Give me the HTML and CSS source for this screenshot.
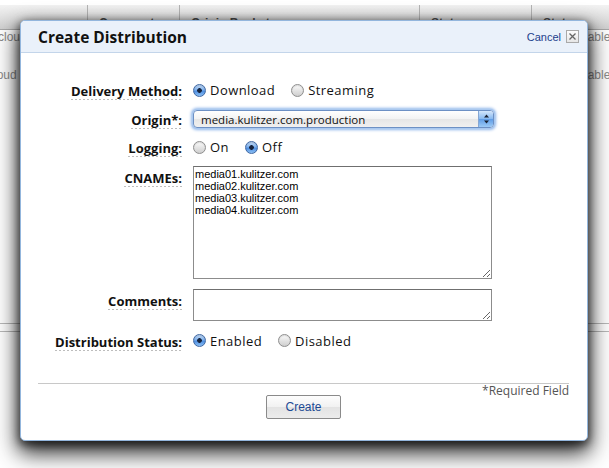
FILE: index.html
```html
<!DOCTYPE html>
<html>
<head>
<meta charset="utf-8">
<title>Create Distribution</title>
<link rel="stylesheet" href="styles.css">
</head>
<body>
<div class="bg">
  <div class="thead">
    <div class="th c1"></div>
    <div class="th c2">Comment</div>
    <div class="th c3">Origin Bucket</div>
    <div class="th c4">State</div>
    <div class="th c5">Status</div>
  </div>
  <div class="trow">
    <div class="td c1"><span class="shift1">cloud</span></div>
    <div class="td c2"></div>
    <div class="td c3"></div>
    <div class="td c4"></div>
    <div class="td c5"><span class="status">Enabled</span></div>
  </div>
  <div class="trow">
    <div class="td c1"><span class="shift2">cloud</span></div>
    <div class="td c2"></div>
    <div class="td c3"></div>
    <div class="td c4"></div>
    <div class="td c5"><span class="status">Enabled</span></div>
  </div>
  <div class="tfoot"></div>
</div>

<div class="dialog">
  <div class="dlg-head">
    <h1 class="dlg-title">Create Distribution</h1>
    <div class="dlg-cancel">
      <a class="cancel-link">Cancel</a>
      <span class="close-box">
        <svg width="7" height="7" viewBox="0 0 7 7"><path d="M0.5 0.5L6.5 6.5M6.5 0.5L0.5 6.5" stroke="#666" stroke-width="1.3"/></svg>
      </span>
    </div>
  </div>

  <div class="dlg-body">
    <div class="form">
      <div class="lbl"><span>Delivery Method:</span></div>
      <div class="ctl">
        <label class="opt"><span class="radio on"></span>Download</label>
        <label class="opt"><span class="radio"></span>Streaming</label>
      </div>

      <div class="lbl"><span>Origin*:</span></div>
      <div class="ctl">
        <div class="select">
          <span class="select-text">media.kulitzer.com.production</span>
          <span class="stepper">
            <svg width="7" height="10" viewBox="0 0 7 10"><path d="M3.5 0.5L6 3.5H1Z M3.5 9.5L6 6.5H1Z" fill="#1a2233"/></svg>
          </span>
        </div>
      </div>

      <div class="lbl"><span>Logging:</span></div>
      <div class="ctl">
        <label class="opt"><span class="radio"></span>On</label>
        <label class="opt"><span class="radio on"></span>Off</label>
      </div>

      <div class="lbl top"><span>CNAMEs:</span></div>
      <div class="ctl">
        <textarea class="ta ta-big" spellcheck="false">media01.kulitzer.com
media02.kulitzer.com
media03.kulitzer.com
media04.kulitzer.com</textarea>
      </div>

      <div class="lbl top"><span>Comments:</span></div>
      <div class="ctl">
        <textarea class="ta ta-small" spellcheck="false"></textarea>
      </div>

      <div class="lbl"><span>Distribution Status:</span></div>
      <div class="ctl">
        <label class="opt"><span class="radio on"></span>Enabled</label>
        <label class="opt"><span class="radio"></span>Disabled</label>
      </div>
    </div>

    <div class="dlg-foot">
      <div class="required">*Required Field</div>
      <button class="btn" type="button">Create</button>
    </div>
  </div>
</div>
</body>
</html>
```

FILE: styles.css
```css
* { box-sizing: border-box; }
html, body { margin: 0; padding: 0; background: #fff; }
body {
  width: 609px;
  height: 468px;
  overflow: hidden;
  position: relative;
  font-family: "Open Sans", "DejaVu Sans", sans-serif;
  color: #111;
}

/* background table */
.bg {
  padding-top: 5px;
  font-family: "Liberation Sans", Arial, sans-serif;
  font-size: 12px;
  color: #8a8a8a;
}
.thead {
  display: flex;
  height: 25px;
  background: linear-gradient(#f3f3f3, #d0d0d0);
  border-bottom: 1px solid #a8a8a8;
}
.th {
  border-left: 1px solid #b4b4b4;
  font-weight: bold;
  color: #4a4a4a;
  padding: 11px 0 0 11px;
  line-height: 14px;
}
.th.c1 { border-left: 0; }
.c1 { width: 87px; }
.c2 { width: 92px; }
.c3 { width: 240px; }
.c4 { width: 112px; }
.c5 { flex: 1; }
.trow {
  display: flex;
  height: 38px;
  line-height: 14px;
}
.td { overflow: hidden; white-space: nowrap; }
.shift1 { margin-left: -2px; }
.shift2 { margin-left: -12px; }
.status { margin-left: 42px; }
.tfoot {
  margin-top: 217px;
  height: 9px;
  border-top: 1px solid #b8b8b8;
  border-bottom: 1px solid #b8b8b8;
}

/* dialog */
.dialog {
  position: absolute;
  left: 20px;
  top: 20px;
  width: 568px;
  height: 421px;
  background: #fff;
  border: 1px solid #93b6dd;
  border-radius: 5px;
  box-shadow: 0 10px 22px 2px rgba(0, 0, 0, 0.85), 0 3px 8px 1px rgba(0, 0, 0, 0.55);
  overflow: hidden;
}
.dlg-head {
  height: 32px;
  background: #eaf1fa;
  border-bottom: 1px solid #c3d5ea;
  display: flex;
  align-items: center;
  justify-content: space-between;
  padding: 0 8px 0 17px;
}
.dlg-title {
  margin: 0;
  font-size: 15.5px;
  font-weight: bold;
  color: #111;
}
.dlg-cancel {
  display: flex;
  align-items: center;
  gap: 5px;
}
.cancel-link {
  font-family: "Liberation Sans", Arial, sans-serif;
  font-size: 11px;
  color: #1d3f8c;
}
.close-box {
  width: 13px;
  height: 13px;
  border: 1px solid #a9a9a9;
  background: linear-gradient(#fdfdfd, #e6e6e6);
  display: flex;
  align-items: center;
  justify-content: center;
}

.form {
  display: grid;
  grid-template-columns: 161px 1fr;
  column-gap: 11px;
  row-gap: 10px;
  padding-top: 27px;
  align-items: center;
  grid-template-rows: 20px 18px 18px 113px 32px 19px;
}
.lbl { text-align: right; }
.lbl.top { align-self: start; }
.lbl span {
  display: inline-block;
  font-size: 13px;
  font-weight: bold;
  line-height: 15px;
  padding-bottom: 1px;
  background: linear-gradient(to right, #bdbdbd 50%, transparent 50%) repeat-x left bottom / 4px 1px;
}
.ctl { display: flex; align-items: center; }

.opt {
  display: inline-flex;
  align-items: center;
  gap: 4px;
  margin-right: 16px;
  font-size: 13px;
  letter-spacing: 0.45px;
  line-height: 16px;
  color: #111;
}
.radio {
  width: 13px;
  height: 13px;
  border-radius: 50%;
  border: 1px solid #8e8e8e;
  background: linear-gradient(#fbfbfb, #e2e2e2 55%, #cfcfcf);
  box-shadow: inset 0 1px 1px rgba(0, 0, 0, 0.12);
}
.radio.on {
  border-color: #4068a3;
  background:
    radial-gradient(circle at 50% 50%, #16233c 0, #16233c 2px, transparent 2.6px),
    linear-gradient(#c6ddf8, #7eb1ee 45%, #4d8de0 55%, #8cc0f4);
}

.select {
  width: 301px;
  height: 18px;
  border: 1px solid #6d90c4;
  border-radius: 4px;
  box-shadow: 0 0 0 1px #a9c8ef, 0 0 3px 2px #8fb6ea;
  background: linear-gradient(#ffffff, #f3f3f3 50%, #e6e6e6 51%, #f0f0f0);
  display: flex;
  align-items: center;
  overflow: hidden;
}
.select-text {
  flex: 1;
  padding-left: 7px;
  font-size: 11.5px;
  color: #111;
}
.stepper {
  width: 15px;
  height: 100%;
  background: linear-gradient(#d3e6fc, #86b8f0 50%, #5f9ce6 51%, #9ccaf6);
  border-left: 1px solid #86a6d2;
  display: flex;
  align-items: center;
  justify-content: center;
}

.ta {
  display: block;
  width: 299px;
  margin: 0;
  padding: 1px 1px;
  border: 1px solid #8c8c8c;
  border-top-color: #6f6f6f;
  font-family: "Liberation Sans", Arial, sans-serif;
  font-size: 11px;
  line-height: 12px;
  color: #000;
  background: #fff;
  outline: none;
}
.ta-big { height: 113px; }
.ta-small { height: 32px; }

.dlg-foot {
  margin: 33px 18px 0 17px;
  border-top: 1px solid #c8c8c8;
  display: grid;
}
.required {
  grid-area: 1 / 1;
  justify-self: end;
  align-self: start;
  font-size: 12px;
  line-height: 14px;
  color: #555;
}
.btn {
  grid-area: 1 / 1;
  justify-self: center;
  margin-top: 11px;
  width: 75px;
  height: 24px;
  border: 1px solid #8a8a8a;
  border-radius: 2px;
  background: linear-gradient(#fdfdfd, #f1f1f1 50%, #e3e3e3 51%, #ececec);
  font-family: "Liberation Sans", Arial, sans-serif;
  font-size: 12px;
  color: #1c4a94;
  padding: 0;
}
```
